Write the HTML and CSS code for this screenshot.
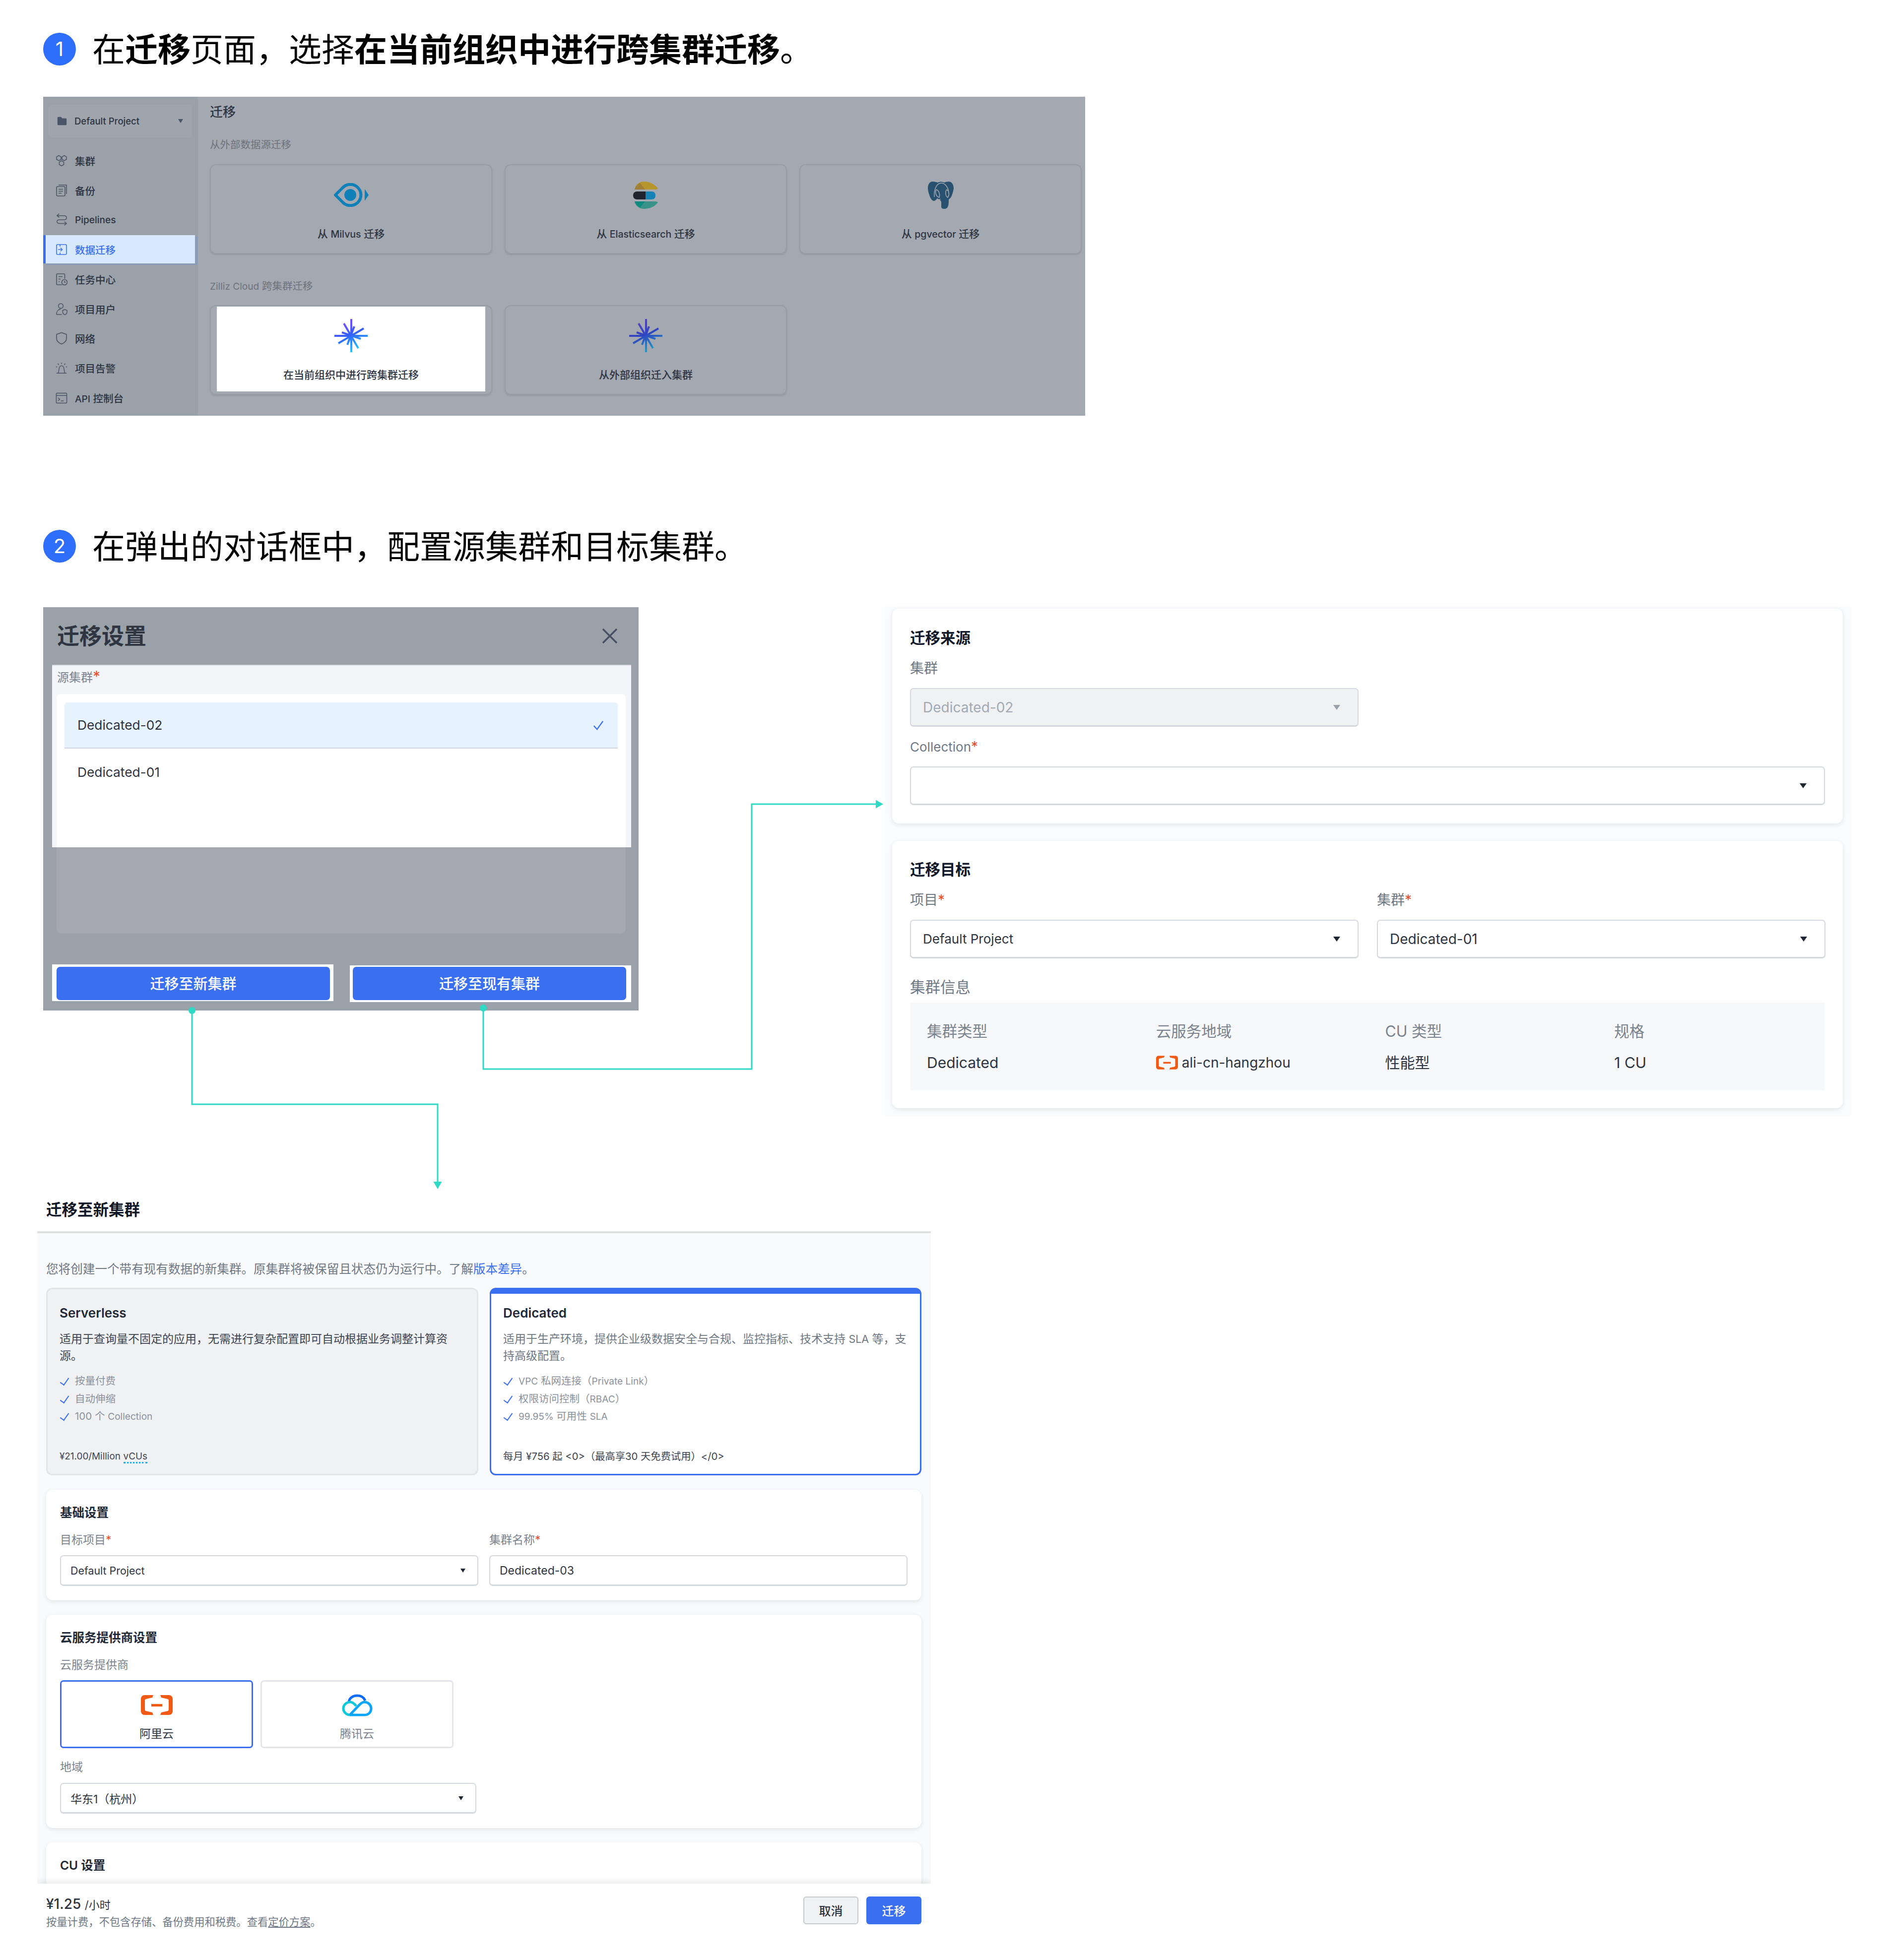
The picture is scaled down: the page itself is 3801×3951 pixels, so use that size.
FILE: index.html
```html
<!DOCTYPE html>
<html lang="zh-CN">
<head>
  <meta charset="UTF-8" />
  <title>跨集群迁移</title>
  <link rel="stylesheet" href="styles.css">
</head>
<body>
  <svg width="0" height="0" class="defs">
    <defs>
      <linearGradient id="star-bright" x1="0.2" y1="0" x2="0.6" y2="1">
        <stop offset="0" stop-color="#8f45ff"/>
        <stop offset="0.5" stop-color="#3360ff"/>
        <stop offset="1" stop-color="#22d0ff"/>
      </linearGradient>
      <linearGradient id="star-dim" x1="0.2" y1="0" x2="0.6" y2="1">
        <stop offset="0" stop-color="#5f3fc0"/>
        <stop offset="0.5" stop-color="#2f45c0"/>
        <stop offset="1" stop-color="#22a0c4"/>
      </linearGradient>
      <symbol id="star" viewBox="0 0 68 68">
        <path d="M34 0V67M0 34H67M19 9L48 59M8 49L59 19M40 15L26 52M15 27L53 40" fill="none" stroke-width="4"/>
      </symbol>
      <symbol id="aliyun" viewBox="0 0 64 40">
        <path fill="#f05a14" d="M8 0H25L23 5L10 8C8 9 8 10 8 12V28C8 30 8 31 10 32L23 35L25 40H8C3 40 0 37 0 32V8C0 3 3 0 8 0Z"/>
        <path fill="#f05a14" d="M56 0H39L41 5L54 8C56 9 56 10 56 12V28C56 30 56 31 54 32L41 35L39 40H56C61 40 64 37 64 32V8C64 3 61 0 56 0Z"/>
        <rect x="21" y="18" width="22" height="5" fill="#f05a14"/>
      </symbol>
    </defs>
  </svg>

  <main class="page">
    <h2 class="step">
      <span class="step-num">1</span>
      <span class="step-text">在<b>迁移</b>页面，选择<b>在当前组织中进行跨集群迁移</b>。</span>
    </h2>

    <section class="shot">
      <aside class="shot-side">
        <div class="project">
          <svg class="project-icon" viewBox="0 0 24 24"><path fill="#4a5568" d="M2 5a2 2 0 0 1 2-2h6l2 3h8a2 2 0 0 1 2 2v11a2 2 0 0 1-2 2H4a2 2 0 0 1-2-2z"/></svg>
          <span>Default Project</span>
          <i class="caret caret-nav"></i>
        </div>
        <ul class="nav">
          <li class="nav-item">
            <svg class="nav-icon" viewBox="0 0 24 24"><path d="M6.5 1.5l4.5 2.6v5.2l-4.5 2.6L2 9.300V4.100zM17.500 1.500l4.500 2.600v5.200l-4.500 2.600L13 9.300V4.100zM12 12l4.500 2.600v5.200L12 22.400l-4.500-2.600v-5.200z"/></svg>
            集群
          </li>
          <li class="nav-item">
            <svg class="nav-icon" viewBox="0 0 24 24"><rect x="2" y="4" width="17" height="19" rx="2"/><path d="M6 1H22V19M6 9.500H15M6 13.500H15M6 17.500H12"/></svg>
            备份
          </li>
          <li class="nav-item">
            <svg class="nav-icon" viewBox="0 0 24 28"><path d="M7 1L2 5L7 9M2 5H17C21 5 23 7 23 10C23 13 21 14 17 14H8C4 14 2 16 2 18C2 21 4 22 8 22H22M18 18L23 22L18 26"/></svg>
            <span class="latin">Pipelines</span>
          </li>
          <li class="nav-item active">
            <svg class="nav-icon" viewBox="0 0 24 24"><rect x="2" y="2" width="20" height="20" rx="2"/><path d="M9 2V6M9 18V22M5 12H13M10 8.500L13.500 12L10 15.500"/></svg>
            数据迁移
          </li>
          <li class="nav-item">
            <svg class="nav-icon" viewBox="0 0 24 26"><path d="M13 24H3.500A1.500 1.500 0 0 1 2 22.500V3.500A1.500 1.500 0 0 1 3.500 2H17A1.500 1.500 0 0 1 18.500 3.500V12M6 7.500H14M6 12.500H10M6 17.500H8"/><circle cx="18" cy="19" r="5.500"/><path d="M18 16.500V19H20.500"/></svg>
            任务中心
          </li>
          <li class="nav-item">
            <svg class="nav-icon" viewBox="0 0 25 26"><circle cx="11" cy="6.500" r="5"/><path d="M2 24.500C2 18 5.500 13.500 11 13M2 24.500H13M15 15.500L19.500 14L24 15.500V19C24 22 22 24 19.500 25C17 24 15 22 15 19Z"/></svg>
            项目用户
          </li>
          <li class="nav-item">
            <svg class="nav-icon" viewBox="0 0 24 26"><path d="M12 1.500L22 5V13C22 19 17 22.500 12 24.500C7 22.500 2 19 2 13V5Z"/></svg>
            网络
          </li>
          <li class="nav-item">
            <svg class="nav-icon" viewBox="0 0 26 26"><path d="M2 24H24M6 24L8 13C8.500 10 10 8 13 8C16 8 17.500 10 18 13L20 24M13 1V4M5 3L7 6M21 3L19 6M1 10L3.500 11M25 10L22.500 11"/></svg>
            项目告警
          </li>
          <li class="nav-item">
            <svg class="nav-icon" viewBox="0 0 25 24"><rect x="1.500" y="2" width="22" height="21" rx="2"/><path d="M1.500 7H23.500M5 12L9 15L5 18M11 18.500H17"/></svg>
            <span><span class="latin">API</span> 控制台</span>
          </li>
        </ul>
      </aside>

      <div class="shot-main">
        <h3 class="shot-title">迁移</h3>
        <p class="src-label">从外部数据源迁移</p>
        <div class="src-grid">
          <div class="src-card">
            <div class="src-inner">
              <div class="src-icon">
                <svg width="72" height="48" viewBox="0 0 72 48">
                  <path d="M4 24L18 10A21.300 21.300 0 1 1 18 38Z" fill="none" stroke="#1080b8" stroke-width="6" stroke-linejoin="round"/>
                  <circle cx="34" cy="24" r="12" fill="#1080b8"/>
                  <path d="M63 12L71 24L63 36Z" fill="#1080b8"/>
                </svg>
              </div>
              <span>从 <span class="latin">Milvus</span> 迁移</span>
            </div>
          </div>
          <div class="src-card">
            <div class="src-inner">
              <div class="src-icon">
                <svg width="51" height="55" viewBox="0 0 51 55">
                  <path fill="#b8962e" d="M3 16C5 6 12 0 22 0C34 0 44 6 50 14C49 15 47 16 44 16Z"/>
                  <path fill="#a08038" d="M3 16C5 9 9 5 14 3L24 16Z"/>
                  <path fill="#1f2430" d="M8 20H25V36H8C3 36 0 33 0 28C0 23 3 20 8 20Z"/>
                  <path fill="#1782b5" d="M25 20H37C42 20 45 23 45 28C45 33 42 36 37 36H25Z"/>
                  <path fill="#3a9389" d="M3 40H44C47 40 49 41 50 42C44 50 34 55 22 55C12 55 5 49 3 40Z"/>
                  <path fill="#0f8a80" d="M3 40H24L14 52C9 50 5 46 3 40Z"/>
                </svg>
              </div>
              <span>从 <span class="latin">Elasticsearch</span> 迁移</span>
            </div>
          </div>
          <div class="src-card">
            <div class="src-inner">
              <div class="src-icon">
                <svg width="52" height="55" viewBox="0 0 52 55">
                  <path fill="#28506f" d="M10 0C3 0 0 6 0 14C1 24 6 39 12 39C15 39 17 36 19 34C23 36 27 38 27 42V50C27 54 29 55 34 55C39 55 42 50 42 40C42 37 42 36 43 35C47 33 50 25 52 14C52 6 48 0 42 0C38 0 35 1 33 2C29 0 24 0 20 2C17 1 13 0 10 0Z"/>
                  <path fill="none" stroke="#a4a8b0" stroke-width="1.500" d="M13 31C12 15 18 3 27 3C36 3 42 14 42 24M38 16C34 22 36 30 40 32C44 26 43 20 38 16M17 16C14 22 16 30 23 32C25 25 22 18 17 16M17 40C20 39 23 38 25 35M43 36H52"/>
                </svg>
              </div>
              <span>从 <span class="latin">pgvector</span> 迁移</span>
            </div>
          </div>
        </div>
        <p class="src-label src-label-second"><span class="latin">Zilliz Cloud</span> 跨集群迁移</p>
        <div class="src-grid">
          <div class="src-card">
            <div class="src-inner highlighted">
              <div class="src-icon"><svg class="star-icon star-bright" width="68" height="68"><use href="#star"/></svg></div>
              <span>在当前组织中进行跨集群迁移</span>
            </div>
          </div>
          <div class="src-card">
            <div class="src-inner">
              <div class="src-icon"><svg class="star-icon star-dim" width="68" height="68"><use href="#star"/></svg></div>
              <span>从外部组织迁入集群</span>
            </div>
          </div>
        </div>
      </div>
    </section>

    <h2 class="step step-second">
      <span class="step-num">2</span>
      <span class="step-text">在弹出的对话框中，配置源集群和目标集群。</span>
    </h2>

    <section class="diagram">
      <svg class="connectors" width="1720" height="1180" viewBox="0 0 1720 1180">
        <path d="M300 813V1002H795V1160M887 808V931H1428V397H1680" fill="none" stroke="#2fd9c6" stroke-width="3"/>
        <circle cx="300" cy="813" r="7" fill="#2fd9c6"/>
        <circle cx="887" cy="808" r="7" fill="#2fd9c6"/>
        <path d="M786.500 1158H803.500L795 1173Z" fill="#2fd9c6"/>
        <path d="M1678 388.500V405.500L1693 397Z" fill="#2fd9c6"/>
      </svg>

      <div class="diagram-top">
        <div class="dialog">
          <div class="dialog-head">
            <h3>迁移设置</h3>
            <svg class="dialog-close" viewBox="0 0 36 36"><path d="M4 4L32 32M32 4L4 32"/></svg>
          </div>
          <div class="dialog-patch">
            <div class="dialog-label">源集群<em>*</em></div>
            <div class="option-list">
              <div class="option selected">
                Dedicated-02
                <svg class="option-check" viewBox="0 0 24 24"><path d="M2 13L9 21L22 3"/></svg>
              </div>
              <div class="option">Dedicated-01</div>
            </div>
          </div>
          <div class="dialog-empty"></div>
          <div class="dialog-actions">
            <div class="btn-patch"><button class="btn-primary">迁移至新集群</button></div>
            <div class="btn-patch btn-patch-second"><button class="btn-primary">迁移至现有集群</button></div>
          </div>
        </div>

        <div class="move-panel">
          <div class="panel-card">
            <h4 class="panel-title">迁移来源</h4>
            <div class="panel-label">集群</div>
            <div class="select half disabled"><span>Dedicated-02</span><i class="caret"></i></div>
            <div class="panel-label label-tight"><span class="latin">Collection</span><em>*</em></div>
            <div class="select"><span></span><i class="caret"></i></div>
          </div>
          <div class="panel-card">
            <h4 class="panel-title">迁移目标</h4>
            <div class="two-col">
              <div>
                <div class="panel-label">项目<em>*</em></div>
                <div class="select"><span class="latin">Default Project</span><i class="caret"></i></div>
              </div>
              <div>
                <div class="panel-label">集群<em>*</em></div>
                <div class="select"><span>Dedicated-01</span><i class="caret"></i></div>
              </div>
            </div>
            <div class="panel-label label-info">集群信息</div>
            <div class="info-box">
              <span class="info-key">集群类型</span>
              <span class="info-key">云服务地域</span>
              <span class="info-key">CU 类型</span>
              <span class="info-key">规格</span>
              <span>Dedicated</span>
              <span class="info-region"><svg width="44" height="28"><use href="#aliyun"/></svg>ali-cn-hangzhou</span>
              <span>性能型</span>
              <span>1 CU</span>
            </div>
          </div>
        </div>
      </div>

      <div class="new-cluster">
        <div class="new-head"><h3>迁移至新集群</h3></div>
        <div class="new-body">
          <p class="new-intro">您将创建一个带有现有数据的新集群。原集群将被保留且状态仍为运行中。了解<a>版本差异</a>。</p>
          <div class="plans">
            <div class="plan">
              <h4>Serverless</h4>
              <p class="plan-desc">适用于查询量不固定的应用，无需进行复杂配置即可自动根据业务调整计算资源。</p>
              <ul class="plan-list">
                <li>按量付费</li>
                <li>自动伸缩</li>
                <li>100 个 <span class="latin">Collection</span></li>
              </ul>
              <div class="plan-price"><span class="latin">¥21.00/Million</span> <span class="dotted latin">vCUs</span></div>
            </div>
            <div class="plan plan-selected">
              <h4>Dedicated</h4>
              <p class="plan-desc">适用于生产环境，提供企业级数据安全与合规、监控指标、技术支持 <span class="latin">SLA</span> 等，支持高级配置。</p>
              <ul class="plan-list">
                <li><span class="latin">VPC</span> 私网连接（<span class="latin">Private Link</span>）</li>
                <li>权限访问控制（<span class="latin">RBAC</span>）</li>
                <li><span class="latin">99.95%</span> 可用性 <span class="latin">SLA</span></li>
              </ul>
              <div class="plan-price">每月 ¥756 起 &lt;0&gt;（最高享30 天免费试用）&lt;/0&gt;</div>
            </div>
          </div>

          <div class="form-card">
            <h4 class="form-title">基础设置</h4>
            <div class="two-col form-cols">
              <div>
                <div class="form-label">目标项目<em>*</em></div>
                <div class="select select-sm"><span class="latin">Default Project</span><i class="caret caret-sm"></i></div>
              </div>
              <div>
                <div class="form-label">集群名称<em>*</em></div>
                <div class="select select-sm"><span>Dedicated-03</span></div>
              </div>
            </div>
          </div>

          <div class="form-card">
            <h4 class="form-title">云服务提供商设置</h4>
            <div class="form-label">云服务提供商</div>
            <div class="tiles">
              <div class="tile tile-selected">
                <div class="tile-icon"><svg width="64" height="40"><use href="#aliyun"/></svg></div>
                <span>阿里云</span>
              </div>
              <div class="tile">
                <div class="tile-icon">
                  <svg width="62" height="45" viewBox="0 0 62 45" fill="none" stroke-width="5">
                    <path d="M14 16C15 8 22 3 31 3C38 3 44 6 47 13" stroke="#0a6cff"/>
                    <path d="M29 24C24 18 21 16 17 16C9 16 3 22 3 29C3 36 9 42 17 42" stroke="#0fc8d8"/>
                    <path d="M16 42H46C54 42 59 36 59 29C59 22 53 16 46 16C42 16 39 18 36 21L16 42" stroke="#0aa5ff"/>
                  </svg>
                </div>
                <span>腾讯云</span>
              </div>
            </div>
            <div class="form-label region-label">地域</div>
            <div class="select select-sm region-select"><span>华东1（杭州）</span><i class="caret caret-sm"></i></div>
          </div>

          <div class="form-card">
            <h4 class="form-title">CU 设置</h4>
          </div>
        </div>
        <div class="new-foot">
          <div>
            <div class="foot-price">¥1.25 <small>/小时</small></div>
            <div class="foot-note">按量计费，不包含存储、备份费用和税费。查看<u>定价方案</u>。</div>
          </div>
          <div class="foot-actions">
            <button class="btn-cancel">取消</button>
            <button class="btn-go">迁移</button>
          </div>
        </div>
      </div>
    </section>
  </main>
</body>
</html>
```

FILE: styles.css
```css
* {
  margin: 0;
  padding: 0;
  box-sizing: border-box;
}

body {
  font-family: Inter, 'Noto Sans CJK SC', sans-serif;
  background-color: #fff;
  color: #2d3442;
}

.defs {
  position: absolute;
}

ul {
  list-style: none;
}

em {
  font-style: normal;
  color: #e5502f;
}

/* Inter runs wider than the font in the screenshots */
.latin {
  font-size: 0.93em;
}

.page {
  width: 3801px;
  height: 3951px;
  padding: 66px 0 0 87px;
  overflow: hidden;
}

/* Step headings */
.step {
  display: flex;
  align-items: center;
  gap: 33px;
  height: 66px;
  font-family: 'Noto Sans CJK SC', sans-serif;
  font-size: 66px;
  font-weight: 400;
  line-height: 66px;
  color: #000;
}

.step-text {
  margin-bottom: 8px;
}

.step b {
  font-weight: 700;
}

.step-second {
  margin-top: 230px;
}

.step-num {
  width: 66px;
  height: 66px;
  border-radius: 50%;
  background-color: #2f6dfb;
  color: #fff;
  font-family: Inter, sans-serif;
  font-size: 40px;
  text-align: center;
}

/* Dimmed console screenshot */
.shot {
  display: flex;
  width: 2100px;
  height: 643px;
  margin-top: 63px;
  overflow: hidden;
}

.shot-side {
  width: 312px;
  background-color: #9ba1a9;
}

.project {
  display: flex;
  align-items: center;
  gap: 14px;
  height: 66px;
  margin: 16px 12px 17px 10px;
  padding: 0 18px 0 17px;
  border-radius: 8px;
  background-color: #a0a5ad;
  font-size: 18.500px;
  font-weight: 500;
}

.project-icon {
  width: 22px;
  height: 22px;
}

.caret {
  width: 0;
  height: 0;
  margin-left: auto;
  border-left: 7px solid transparent;
  border-right: 7px solid transparent;
  border-top: 10px solid #1f2633;
}

.caret-nav {
  border-left-width: 5px;
  border-right-width: 5px;
  border-top: 8px solid #4a5568;
}

.caret-sm {
  border-left-width: 5px;
  border-right-width: 5px;
  border-top-width: 8px;
}

.nav-item {
  display: flex;
  align-items: center;
  gap: 15px;
  height: 59.75px;
  padding-left: 25px;
  font-size: 20.500px;
  font-weight: 500;
}

.nav-item.active {
  width: 306px;
  height: 57px;
  margin: 1px 0 1.75px;
  padding-left: 20px;
  border-left: 5px solid #3a70f0;
  background-color: #d7e8ff;
  box-shadow: 6px 3px 0 #8a9cb8;
  color: #3a70f0;
}

.nav-icon {
  width: 24px;
  height: 26px;
  flex-shrink: 0;
  fill: none;
  stroke: #4a5465;
  stroke-width: 1.600;
  stroke-linejoin: round;
}

.active .nav-icon {
  stroke: #3a70f0;
}

.shot-main {
  flex: 1;
  padding-left: 24px;
  background-color: #a4a8b0;
}

.shot-title {
  height: 62px;
  font-size: 26px;
  font-weight: 500;
  line-height: 62px;
}

.src-label {
  height: 74px;
  font-size: 20.500px;
  line-height: 70px;
  color: #6d737d;
}

.src-label-second {
  height: 103px;
  padding-top: 26px;
  line-height: 77px;
}

.src-grid {
  display: grid;
  grid-template-columns: repeat(3, 569px);
  gap: 25px;
}

.src-card {
  height: 181px;
  padding: 1px 12px 5px;
  border: 2px solid #979ca5;
  border-radius: 12px;
  box-shadow: 0 2px 3px rgba(60, 60, 70, 0.15);
}

.src-inner {
  display: flex;
  flex-direction: column;
  align-items: center;
  height: 100%;
  font-size: 21px;
  font-weight: 500;
  line-height: 40px;
}

.src-inner.highlighted {
  background-color: #fff;
}

.src-icon {
  display: flex;
  align-items: center;
  justify-content: center;
  height: 118px;
}

.star-bright {
  stroke: url(#star-bright);
}

.star-dim {
  stroke: url(#star-dim);
}

/* Dialog and the two screens it leads to */
.diagram {
  position: relative;
  margin-top: 90px;
}

.connectors {
  position: absolute;
  top: 0;
  left: 0;
  z-index: 2;
  pointer-events: none;
}

.diagram-top {
  display: flex;
  align-items: flex-start;
  gap: 496px;
  height: 1026px;
}

.dialog {
  width: 1200px;
  height: 813px;
  flex-shrink: 0;
  background-color: #9ba1a9;
}

.dialog-head {
  display: flex;
  align-items: center;
  justify-content: space-between;
  height: 116px;
  padding: 0 40px 0 28px;
}

.dialog-head h3 {
  margin-bottom: 5px;
  font-size: 45px;
  font-weight: 600;
  color: #2f3642;
}

.dialog-close {
  width: 36px;
  height: 36px;
  fill: none;
  stroke: #465062;
  stroke-width: 3.500;
}

.dialog-patch {
  height: 368px;
  margin: 0 15px 0 18px;
  border-top: 2px solid #d8dbe2;
  background-color: #f4f5f9;
}

.dialog-label {
  height: 57px;
  padding-left: 10px;
  font-size: 24px;
  line-height: 48px;
  color: #7b8490;
}

.dialog-label em {
  font-size: 30px;
  line-height: 0;
}

.option-list {
  height: 309px;
  margin: 0 11px 0 9px;
  padding: 17px 16px 0;
  border-radius: 8px 8px 0 0;
  background-color: #fff;
}

.option {
  display: flex;
  align-items: center;
  justify-content: space-between;
  height: 94px;
  padding: 0 28px 0 26px;
  font-size: 26.300px;
}

.option.selected {
  height: 93px;
  border-bottom: 2px solid #cfd6e2;
  border-radius: 6px 6px 0 0;
  background-color: #e6f2fe;
}

.option-check {
  width: 22px;
  height: 22px;
  fill: none;
  stroke: #3a70f0;
  stroke-width: 2.500;
}

.dialog-empty {
  height: 174px;
  margin: 0 26px 0 27px;
  border-radius: 0 0 10px 10px;
  background-color: #a5a8b0;
}

.dialog-actions {
  display: flex;
  align-items: flex-start;
  gap: 33px;
  margin: 62px 15px 0 18px;
}

.btn-patch {
  width: 567px;
  height: 74px;
  padding: 5px 7px 2px 9px;
  background-color: #fff;
}

.btn-patch-second {
  margin-top: 2px;
  padding: 3px 10px 4px 6px;
}

.btn-primary {
  width: 100%;
  height: 100%;
  padding-bottom: 3px;
  border: none;
  border-radius: 7px;
  background-color: #3a70f0;
  color: #fff;
  font-family: inherit;
  font-size: 29px;
  font-weight: 500;
}

.move-panel {
  display: flex;
  flex-direction: column;
  gap: 35px;
  width: 1948px;
  height: 1027px;
  margin-top: -1px;
  padding: 4px 17px 0 15px;
  background-color: #fafbfd;
}

.panel-card {
  padding: 40px 36px 37px;
  border-radius: 14px;
  background-color: #fff;
  box-shadow: 0 3px 8px rgba(30, 40, 60, 0.1);
}

.panel-card + .panel-card {
  padding-top: 39px;
  padding-bottom: 36px;
}

.panel-title {
  font-size: 30.500px;
  font-weight: 600;
  line-height: 38px;
  color: #111827;
}

.panel-label {
  margin-top: 22px;
  font-size: 28px;
  line-height: 40px;
  color: #6f7885;
}

.panel-label.label-tight {
  margin-top: 20px;
}

.panel-label.label-info {
  margin-top: 38px;
  font-size: 30.500px;
}

.select {
  display: flex;
  align-items: center;
  height: 78px;
  margin-top: 20px;
  padding: 0 35px 0 24px;
  border: 2px solid #d5d9df;
  border-bottom-width: 3px;
  border-radius: 7px;
  background-color: #fff;
  font-size: 28px;
}

.select.half {
  width: 904px;
}

.select.disabled {
  background-color: #f0f1f3;
  color: #a3a9b2;
}

.select.disabled .caret {
  border-top-color: #9aa1ab;
}

.label-tight + .select {
  margin-top: 19px;
}

.two-col {
  display: grid;
  grid-template-columns: repeat(2, 904px);
  gap: 37px;
}

.info-box {
  display: grid;
  grid-template-columns: repeat(4, 461.750px);
  align-content: start;
  row-gap: 23px;
  height: 177px;
  margin-top: 11px;
  padding: 38px 0 0 34px;
  background-color: #f6f8fa;
  font-size: 30px;
  line-height: 40px;
}

.info-key {
  font-size: 30.500px;
  color: #7b838e;
}

.info-region {
  display: flex;
  align-items: center;
  gap: 8px;
  font-size: 28px;
}

/* Create-new-cluster screen */
.new-cluster {
  display: flex;
  flex-direction: column;
  width: 1801px;
  height: 1551px;
  margin: 150px 0 0 -12px;
  overflow: hidden;
}

.new-head {
  height: 86px;
  padding: 0 0 6px 18px;
  border-bottom: 4px solid #dfe0e2;
}

.new-head h3 {
  font-size: 31.500px;
  font-weight: 600;
  line-height: 78px;
  color: #111827;
}

.new-body {
  flex: 1;
  padding: 52px 19px 0 18px;
  overflow: hidden;
  background-color: #f9fafc;
}

.new-intro {
  font-size: 24.600px;
  line-height: 40px;
  color: #6f7885;
}

.new-intro a {
  color: #3a70f0;
}

.plans {
  display: grid;
  grid-template-columns: 871px 870px;
  gap: 23px;
  margin-top: 18px;
}

.plan {
  display: flex;
  flex-direction: column;
  height: 378px;
  padding: 30px 24px 17px 24px;
  border: 3px solid #e3e5e8;
  border-radius: 12px;
  background-color: #f0f1f3;
}

.plan-selected {
  padding-top: 21px;
  border-color: #3a70f0;
  border-top-width: 12px;
  background-color: #fff;
}

.plan h4 {
  font-size: 26px;
  font-weight: 600;
  line-height: 36px;
  color: #1f2937;
}

.plan-desc {
  margin-top: 17px;
  font-size: 23px;
  line-height: 34px;
  color: #3d4552;
}

.plan-selected .plan-desc {
  color: #6f7885;
}

.plan-list {
  margin-top: 16px;
  font-size: 20.500px;
  color: #8b929d;
}

.plan-list li {
  position: relative;
  height: 35.500px;
  padding-left: 31px;
  line-height: 35.500px;
}

.plan-list li::before {
  content: "";
  position: absolute;
  left: 5px;
  top: 8px;
  width: 8px;
  height: 16px;
  border-right: 2.500px solid #3a70f0;
  border-bottom: 2.500px solid #3a70f0;
  transform: rotate(35deg);
}

.plan-price {
  margin-top: auto;
  font-size: 20.300px;
  line-height: 36px;
  color: #3d4552;
}

.dotted {
  border-bottom: 3px dotted #22a7f0;
}

.form-card {
  margin-top: 29px;
  padding: 30px 28px 29px;
  border-radius: 14px;
  background-color: #fff;
  box-shadow: 0 3px 8px rgba(30, 40, 60, 0.1);
}

.form-title {
  font-size: 24.500px;
  font-weight: 600;
  line-height: 32px;
  color: #1f2937;
}

.form-label {
  margin-top: 23px;
  font-size: 23px;
  line-height: 32px;
  color: #7b838e;
}

.form-cols {
  grid-template-columns: repeat(2, 843px);
  gap: 22px;
}

.select-sm {
  height: 62px;
  margin-top: 15px;
  padding: 0 24px 0 19px;
  font-size: 23px;
}

.tiles {
  display: flex;
  gap: 15px;
  margin-top: 15px;
}

.tile {
  display: flex;
  flex-direction: column;
  align-items: center;
  width: 389px;
  height: 137px;
  border: 3px solid #e3e5e8;
  border-radius: 7px;
  font-size: 23px;
  line-height: 22px;
  color: #7b838e;
}

.tile-selected {
  border-color: #3a70f0;
  color: #2d3442;
}

.tile-icon {
  display: flex;
  align-items: center;
  height: 94px;
}

.form-label.region-label {
  margin-top: 22px;
}

.select-sm.region-select {
  width: 839px;
  margin-top: 16px;
}

.new-foot {
  position: relative;
  display: flex;
  justify-content: space-between;
  height: 154px;
  padding: 23px 19px 0 18px;
  background-color: #fff;
  box-shadow: 0 -6px 10px rgba(0, 0, 0, 0.07);
}

.foot-price {
  font-size: 28px;
  font-weight: 500;
  line-height: 36px;
}

.foot-price small {
  font-size: 22px;
  font-weight: 400;
}

.foot-note {
  font-size: 21.300px;
  line-height: 32px;
  color: #6f7885;
}

.foot-actions {
  display: flex;
  gap: 16px;
  padding-top: 3px;
}

.btn-cancel,
.btn-go {
  width: 111px;
  height: 56px;
  padding-bottom: 2px;
  border-radius: 6px;
  font-family: inherit;
  font-size: 24px;
  font-weight: 500;
}

.btn-cancel {
  border: 2px solid #c5cad0;
  background-color: #f0f1f3;
  color: #2d3442;
}

.btn-go {
  border: none;
  background-color: #3a70f0;
  color: #fff;
}
```
